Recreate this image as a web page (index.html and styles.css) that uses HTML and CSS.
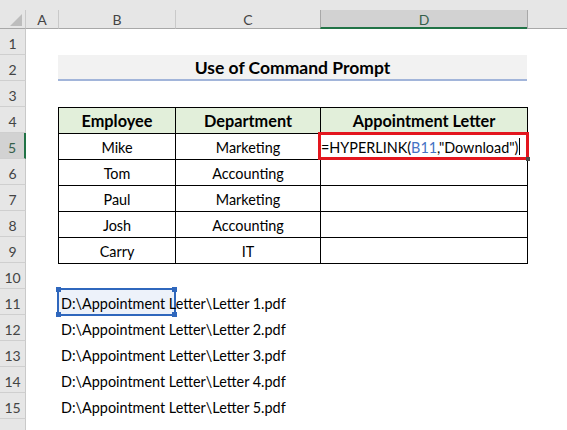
FILE: index.html
```html
<!DOCTYPE html>
<html>
<head>
<meta charset="utf-8">
<link rel="stylesheet" href="styles.css">
</head>
<body>
<div class="sheet">
  <div class="colhead">
    <div class="strip"></div>
    <div class="letters">
      <div class="corner"><svg width="25" height="19" viewBox="0 0 25 19"><polygon points="22,4 22,16 10,16" fill="#bdbdbd"/></svg></div>
      <div class="ch ca">A</div>
      <div class="ch cb">B</div>
      <div class="ch cc">C</div>
      <div class="ch cd sel">D</div>
      <div class="ch rest"></div>
    </div>
  </div>
  <div class="body">
    <div class="rowheads">
      <div class="rh">1</div>
      <div class="rh">2</div>
      <div class="rh">3</div>
      <div class="rh">4</div>
      <div class="rh sel">5</div>
      <div class="rh">6</div>
      <div class="rh">7</div>
      <div class="rh">8</div>
      <div class="rh">9</div>
      <div class="rh">10</div>
      <div class="rh">11</div>
      <div class="rh">12</div>
      <div class="rh">13</div>
      <div class="rh">14</div>
      <div class="rh">15</div>
      <div class="rh"></div>
    </div>
    <div class="grid">
      <div class="title">Use of Command Prompt</div>
      <div class="tbl">
        <div class="td th">Employee</div>
        <div class="td th">Department</div>
        <div class="td th">Appointment Letter</div>
        <div class="td">Mike</div>
        <div class="td">Marketing</div>
        <div class="td"></div>
        <div class="td">Tom</div>
        <div class="td">Accounting</div>
        <div class="td"></div>
        <div class="td">Paul</div>
        <div class="td">Marketing</div>
        <div class="td"></div>
        <div class="td">Josh</div>
        <div class="td">Accounting</div>
        <div class="td"></div>
        <div class="td">Carry</div>
        <div class="td">IT</div>
        <div class="td"></div>
      </div>
      <div class="redbox"><span class="formula">=HYPERLINK(<span class="ref">B11</span>,"Download")</span><span class="caret"></span><span class="fillh"></span></div>
      <div class="selbox"><span class="hd tl"></span><span class="hd tr"></span><span class="hd bl"></span><span class="hd br"></span></div>
      <div class="paths">
        <div class="path">D:\Appointment Letter\Letter 1.pdf</div>
        <div class="path">D:\Appointment Letter\Letter 2.pdf</div>
        <div class="path">D:\Appointment Letter\Letter 3.pdf</div>
        <div class="path">D:\Appointment Letter\Letter 4.pdf</div>
        <div class="path">D:\Appointment Letter\Letter 5.pdf</div>
      </div>
    </div>
  </div>
</div>
</body>
</html>
```
FILE: styles.css
```css
* { box-sizing: border-box; }
html, body { margin: 0; padding: 0; background: #fff; }
body {
  width: 567px;
  height: 430px;
  overflow: hidden;
  font-family: Lato, "Liberation Sans", sans-serif;
  font-size: 14.4px;
  color: #000;
}
.sheet { width: 567px; height: 430px; overflow: hidden; }

.colhead { background: #e6e6e6; }
.strip { height: 10px; }
.letters { display: flex; height: 19px; }
.corner { width: 25px; height: 19px; border-bottom: 1px solid #a8a8a8; }
.corner svg { display: block; }
.ch {
  height: 19px;
  border-left: 1px solid #c9c9c9;
  border-bottom: 1px solid #a8a8a8;
  display: flex;
  align-items: center;
  justify-content: center;
  color: #444;
  font-size: 14px;
  padding-top: 1px;
}
.ca { width: 33px; }
.cb { width: 117px; }
.cc { width: 145px; }
.cd { width: 207px; }
.ch.rest { flex: 1; border-left: 1px solid #a8a8a8; }
.ch.sel {
  background: #d2d2d2;
  border-left: 1px solid #a8a8a8;
  border-bottom: 2px solid #217346;
  color: #35604a;
}

.body { display: flex; }
.rowheads { width: 26px; background: #e6e6e6; }
.rh {
  height: 26px;
  border-right: 1px solid #c9c9c9;
  border-bottom: 1px solid #cfcfcf;
  display: flex;
  align-items: center;
  justify-content: center;
  color: #444;
  font-size: 14px;
  padding-top: 3px;
}
.rh.sel {
  background: #d2d2d2;
  border-right: 2px solid #217346;
  color: #35604a;
}

.grid {
  flex: 1;
  display: grid;
  grid-template-columns: 32px 117px 145px 207px 1fr;
  grid-template-rows: repeat(16, 26px);
}

.title {
  grid-column: 2 / 5;
  grid-row: 2;
  background: #f2f2f2;
  border-bottom: 2px solid #a2b5da;
  display: flex;
  align-items: center;
  justify-content: center;
  font-weight: 700;
  font-size: 17.5px;
  padding-top: 1px;
}

.tbl {
  grid-column: 2 / 5;
  grid-row: 4 / 10;
  align-self: start;
  box-sizing: content-box;
  display: grid;
  grid-template-columns: 117px 145px 207px;
  grid-auto-rows: 26px;
  border-left: 1px solid #000;
  border-top: 1px solid #000;
  width: 469px;
}
.td {
  border-right: 1px solid #000;
  border-bottom: 1px solid #000;
  display: flex;
  align-items: center;
  justify-content: center;
  padding-top: 2px;
  white-space: nowrap;
}
.td.th { background: #e2efda; font-weight: 700; font-size: 16.3px; padding-top: 0; }

.redbox {
  grid-column: 4;
  grid-row: 5;
  margin: -1px -2px -1px -2px;
  border: 3px solid #e3161e;
  position: relative;
  display: flex;
  align-items: center;
  padding-top: 2px;
  padding-left: 0;
  white-space: nowrap;
}
.ref { color: #4472c4; }
.caret {
  display: inline-block;
  width: 1px;
  height: 17px;
  background: #000;
  margin-left: 1px;
  margin-top: -2px;
}
.fillh {
  position: absolute;
  right: -4px;
  bottom: -4px;
  width: 4px;
  height: 4px;
  background: #4a4a4a;
}

.selbox {
  grid-column: 2;
  grid-row: 11;
  margin: -1px;
  border: 2px solid #2f67bd;
  background: #edf2fa;
  position: relative;
}
.hd {
  position: absolute;
  width: 5px;
  height: 5px;
  background: #2f67bd;
}
.hd.tl { left: -3px; top: -3px; }
.hd.tr { right: -3px; top: -3px; }
.hd.bl { left: -3px; bottom: -3px; }
.hd.br { right: -3px; bottom: -3px; }

.paths {
  grid-column: 2 / 6;
  grid-row: 11 / 16;
  display: flex;
  flex-direction: column;
  position: relative;
}
.path {
  height: 26px;
  display: flex;
  align-items: center;
  padding-left: 3px;
  padding-top: 2px;
  white-space: nowrap;
}
```
